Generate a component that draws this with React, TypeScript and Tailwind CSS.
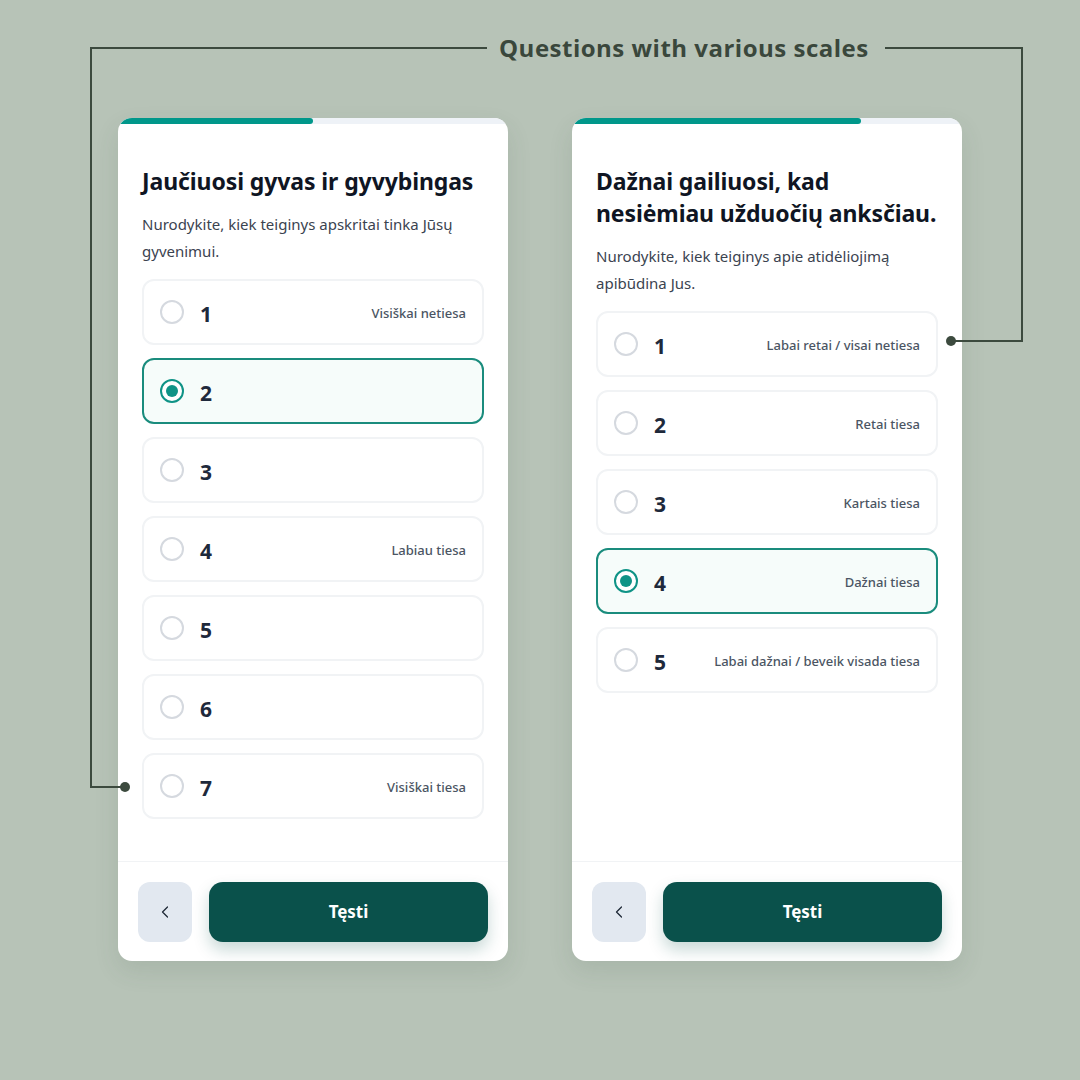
import React from 'react';
import { ChevronLeft } from 'lucide-react';

interface Option {
  value: number;
  label?: string;
}

interface QuestionCardProps {
  progress: number;
  title: string[];
  hint: string[];
  options: Option[];
  selected: number;
}

const Radio: React.FC<{ checked: boolean }> = ({ checked }) =>
  checked ? (
    <span className="w-6 h-6 rounded-full border-2 border-[#0f9386] flex items-center justify-center bg-white">
      <span className="w-3 h-3 rounded-full bg-[#0f9386]" />
    </span>
  ) : (
    <span className="w-6 h-6 rounded-full border-2 border-[#d5d9df] bg-white" />
  );

const QuestionCard: React.FC<QuestionCardProps> = ({ progress, title, hint, options, selected }) => {
  return (
    <div className="w-[390px] h-[843px] bg-white rounded-[14px] overflow-hidden flex flex-col shadow-[0_10px_24px_rgba(60,80,65,0.12)]">
      {/* Progress */}
      <div className="h-[6px] w-full bg-[#eef2f7]">
        <div className="h-full bg-[#00978a] rounded-r-full" style={{ width: `${progress}%` }} />
      </div>

      {/* Body */}
      <div className="flex-1 px-6 pt-[41px]">
        <h2 className="text-[23px] leading-8 font-bold text-[#0f1523] tracking-[-0.1px]">
          {title.map((line) => (
            <div key={line}>{line}</div>
          ))}
        </h2>
        <p className="mt-[14px] text-[15px] leading-[27px] text-[#3b4350]">
          {hint.map((line) => (
            <span key={line} className="block">
              {line}
            </span>
          ))}
        </p>

        <div className="mt-[14px] flex flex-col gap-[13px]">
          {options.map((opt) => {
            const active = opt.value === selected;
            return (
              <div
                key={opt.value}
                className={
                  active
                    ? 'h-[66px] rounded-xl border-2 border-[#1a8c7d] bg-[#f6fcfa] flex items-center px-4'
                    : 'h-[66px] rounded-xl border-2 border-[#f1f3f5] bg-white flex items-center px-4'
                }
              >
                <Radio checked={active} />
                <span className="ml-4 text-[21px] leading-none pt-[4px] font-bold text-[#1e293b]">{opt.value}</span>
                {opt.label && (
                  <span className="ml-auto pt-[3px] text-[13px] font-medium text-[#4b5563]">{opt.label}</span>
                )}
              </div>
            );
          })}
        </div>
      </div>

      {/* Footer */}
      <div className="h-[100px] border-t border-[#f1f3f5] px-5 flex items-center gap-[17px]">
        <button className="w-[54px] h-[60px] rounded-xl bg-[#e2e8f0] flex items-center justify-center text-[#1f2937]">
          <ChevronLeft size={20} strokeWidth={1.5} />
        </button>
        <button className="flex-1 h-[60px] rounded-[14px] bg-[#0a514b] text-white text-[17px] font-bold shadow-[0_8px_16px_rgba(10,81,75,0.22)]">
          Tęsti
        </button>
      </div>
    </div>
  );
};

export default function App() {
  return (
    <div
      className="w-[1080px] h-[1080px] bg-[#b7c3b7] relative"
      style={{ fontFamily: '"Noto Sans", "Open Sans", sans-serif' }}
    >
      <div className="flex flex-col">
        <div className="h-[96px] flex items-center pl-[499px]">
          <h1
            className="text-[24px] font-bold text-[#3a473c] tracking-[0.5px]"
            style={{ fontFamily: '"Open Sans", sans-serif' }}
          >
            Questions with various scales
          </h1>
        </div>

        <div className="mt-[22px] pl-[118px] flex gap-[64px] items-start">
          <QuestionCard
            progress={50}
            title={['Jaučiuosi gyvas ir gyvybingas']}
            hint={['Nurodykite, kiek teiginys apskritai tinka Jūsų', 'gyvenimui.']}
            selected={2}
            options={[
              { value: 1, label: 'Visiškai netiesa' },
              { value: 2 },
              { value: 3 },
              { value: 4, label: 'Labiau tiesa' },
              { value: 5 },
              { value: 6 },
              { value: 7, label: 'Visiškai tiesa' },
            ]}
          />
          <QuestionCard
            progress={74}
            title={['Dažnai gailiuosi, kad', 'nesiėmiau užduočių anksčiau.']}
            hint={['Nurodykite, kiek teiginys apie atidėliojimą', 'apibūdina Jus.']}
            selected={4}
            options={[
              { value: 1, label: 'Labai retai / visai netiesa' },
              { value: 2, label: 'Retai tiesa' },
              { value: 3, label: 'Kartais tiesa' },
              { value: 4, label: 'Dažnai tiesa' },
              { value: 5, label: 'Labai dažnai / beveik visada tiesa' },
            ]}
          />
        </div>
      </div>

      {/* Annotation frame with connector pins */}
      <svg
        className="absolute inset-0 pointer-events-none"
        width="1080"
        height="1080"
        viewBox="0 0 1080 1080"
        fill="none"
      >
        <g stroke="#3c4a3e" strokeWidth="2">
          <path d="M487 48 H91 V787 H125" />
          <path d="M885 48 H1022 V341 H951" />
        </g>
        <circle cx="125" cy="787" r="5" fill="#3c4a3e" />
        <circle cx="951" cy="341" r="5" fill="#3c4a3e" />
      </svg>
    </div>
  );
}
